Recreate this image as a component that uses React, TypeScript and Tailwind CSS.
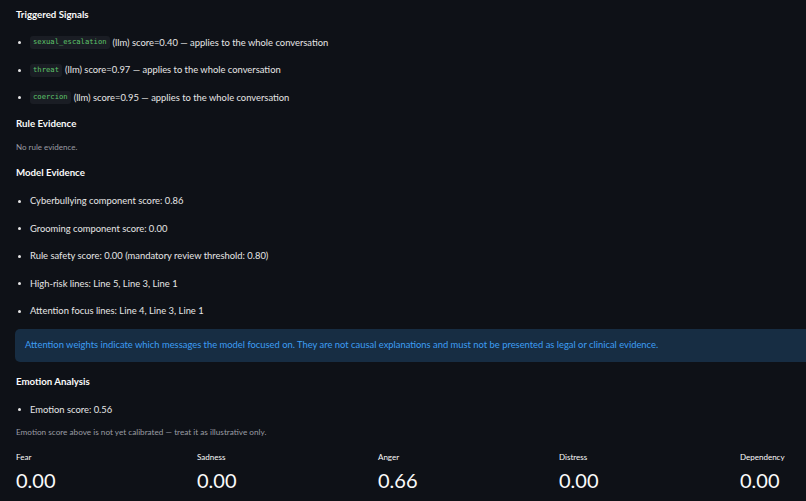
const font = "font-['Lato','Noto_Sans',sans-serif]";

function Code({ children }: { children: string }) {
  return (
    <code className="rounded-[3px] bg-[#1a1d24] px-[3px] py-[1px] font-['DejaVu_Sans_Mono',monospace] text-[7.2px] text-[#5fc56b]">
      {children}
    </code>
  );
}

function Bullet({ children }: { children: React.ReactNode }) {
  return (
    <li className="flex h-[27.5px] items-center">
      <span className="ml-[2px] mr-[9px] h-[3px] w-[3px] rounded-full bg-[#e6e6e6]" />
      <span className="flex items-center gap-[3px]">{children}</span>
    </li>
  );
}

function Heading({ children, className = "" }: { children: string; className?: string }) {
  return <h3 className={`h-[14px] text-[9.7px] font-bold leading-[14px] text-[#fafafa] ${className}`}>{children}</h3>;
}

const signals = [
  ["sexual_escalation", "0.40"],
  ["threat", "0.97"],
  ["coercion", "0.95"],
];

const evidence = [
  "Cyberbullying component score: 0.86",
  "Grooming component score: 0.00",
  "Rule safety score: 0.00 (mandatory review threshold: 0.80)",
  "High-risk lines: Line 5, Line 3, Line 1",
  "Attention focus lines: Line 4, Line 3, Line 1",
];

const emotions = [
  ["Fear", "0.00"],
  ["Sadness", "0.00"],
  ["Anger", "0.66"],
  ["Distress", "0.00"],
  ["Dependency", "0.00"],
];

export default function App() {
  return (
    <div className={`h-[501px] w-[806px] overflow-hidden bg-[#0e1117] ${font} text-[9.4px] text-[#e6e6e6]`}>
      <div className="w-[900px] pl-[16px] pt-[7px]">
        <Heading>Triggered Signals</Heading>
        <ul className="mt-[8px]">
          {signals.map(([name, score]) => (
            <Bullet key={name}>
              <Code>{name}</Code>
              <span>(llm) score={score} — applies to the whole conversation</span>
            </Bullet>
          ))}
        </ul>

        <Heading className="mt-[4px]">Rule Evidence</Heading>
        <p className="mt-[11px] h-[12px] text-[8px] leading-[12px] text-[#9a9ca3]">No rule evidence.</p>

        <Heading className="mt-[12px]">Model Evidence</Heading>
        <ul className="mt-[9px]">
          {evidence.map((e) => (
            <Bullet key={e}>{e}</Bullet>
          ))}
        </ul>

        <div className="-ml-[1px] mt-[4px] flex h-[33px] items-center rounded-[5px] bg-[#172d43] px-[10px] text-[9.4px] text-[#3d9df3]">
          Attention weights indicate which messages the model focused on. They are not causal explanations and must not be presented as legal or clinical evidence.
        </div>

        <Heading className="mt-[12px]">Emotion Analysis</Heading>
        <ul className="mt-[8px]">
          <Bullet>Emotion score: 0.56</Bullet>
        </ul>
        <p className="mt-[2px] h-[12px] text-[8.2px] leading-[12px] text-[#9a9ca3]">
          Emotion score above is not yet calibrated — treat it as illustrative only.
        </p>

        <div className="mt-[13px] grid w-[895px] grid-cols-5 gap-[10px]">
          {emotions.map(([label, value]) => (
            <div key={label}>
              <div className="h-[12px] text-[8px] leading-[12px] text-[#fafafa]">{label}</div>
              <div className="mt-[5px] h-[24px] text-[20px] leading-[24px] text-[#fafafa]">{value}</div>
            </div>
          ))}
        </div>
      </div>
    </div>
  );
}
